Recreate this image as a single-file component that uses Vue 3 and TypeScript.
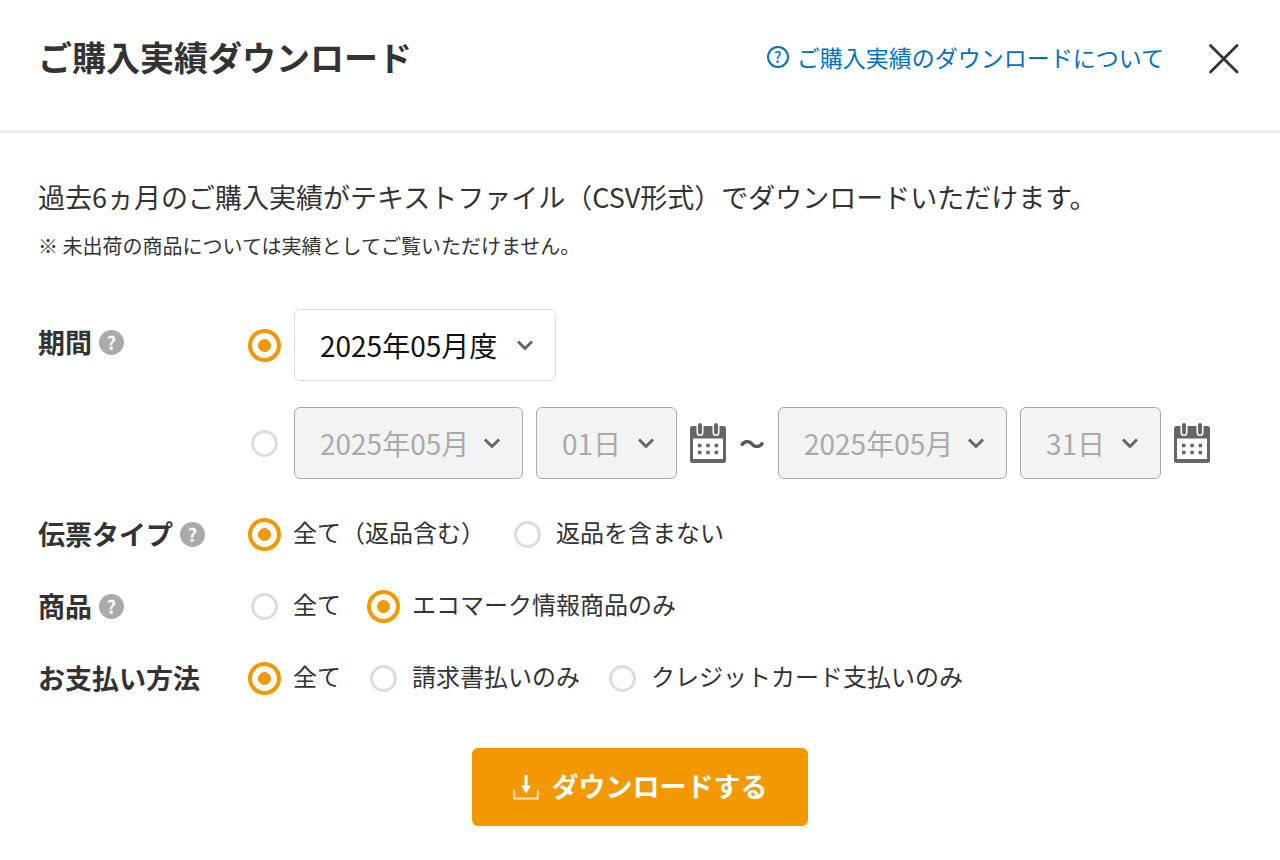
<script setup lang="ts">
import { reactive } from 'vue'

type Choice = { value: string; text: string }
type ChoiceRow = { key: 'slip' | 'item' | 'payment'; label: string; help: boolean; choices: Choice[] }

const form = reactive({
  period: 'month',
  month: '2025年05月度',
  fromMonth: '2025年05月',
  fromDay: '01日',
  toMonth: '2025年05月',
  toDay: '31日',
  slip: 'all',
  item: 'eco',
  payment: 'all',
})

const rows: ChoiceRow[] = [
  {
    key: 'slip',
    label: '伝票タイプ',
    help: true,
    choices: [
      { value: 'all', text: '全て（返品含む）' },
      { value: 'noReturn', text: '返品を含まない' },
    ],
  },
  {
    key: 'item',
    label: '商品',
    help: true,
    choices: [
      { value: 'all', text: '全て' },
      { value: 'eco', text: 'エコマーク情報商品のみ' },
    ],
  },
  {
    key: 'payment',
    label: 'お支払い方法',
    help: false,
    choices: [
      { value: 'all', text: '全て' },
      { value: 'invoice', text: '請求書払いのみ' },
      { value: 'card', text: 'クレジットカード支払いのみ' },
    ],
  },
]

const ranges = [
  { id: 'from', name: '開始', month: 'fromMonth', day: 'fromDay' },
  { id: 'to', name: '終了', month: 'toMonth', day: 'toDay' },
] as const
</script>

<template>
  <main class="dialog">
    <header class="header">
      <h1 class="title">ご購入実績ダウンロード</h1>
      <a class="about" href="#about">
        <span class="about-mark" aria-hidden="true">?</span>
        <span>ご購入実績のダウンロードについて</span>
      </a>
      <button class="close" type="button" aria-label="閉じる">
        <svg viewBox="0 0 34 34" width="34" height="34" aria-hidden="true">
          <path d="M2.500 5.500 29 32M29 5.500 2.500 32" fill="none" stroke="#333" stroke-width="2.800" stroke-linecap="round" />
        </svg>
      </button>
    </header>

    <form class="body" @submit.prevent>
      <p class="lead">過去6ヵ月のご購入実績がテキストファイル（CSV形式）でダウンロードいただけます。</p>
      <p class="note">※ 未出荷の商品については実績としてご覧いただけません。</p>

      <div class="rows">
        <div class="row row-period" role="radiogroup" aria-labelledby="label-period">
          <div class="label">
            <span id="label-period">期間</span>
            <button class="help" type="button" aria-label="期間のヘルプ">?</button>
          </div>
          <div class="period">
            <div class="line">
              <input v-model="form.period" class="radio" type="radio" name="period" value="month" aria-label="月度で指定" />
              <div class="select select-term">
                <select v-model="form.month" aria-label="月度">
                  <option>2025年05月度</option>
                </select>
                <svg class="chevron" viewBox="0 0 18 12" aria-hidden="true"><path d="M2 2.500 9 9.500 16 2.500" /></svg>
              </div>
            </div>
            <div class="line">
              <input v-model="form.period" class="radio" type="radio" name="period" value="range" aria-label="日付で指定" />
              <template v-for="(range, index) in ranges" :key="range.id">
                <span v-if="index > 0" class="wave">〜</span>
                <div class="select select-month">
                  <select v-model="form[range.month]" :disabled="form.period !== 'range'" :aria-label="range.name + '月'">
                    <option>2025年05月</option>
                  </select>
                  <svg class="chevron" viewBox="0 0 18 12" aria-hidden="true"><path d="M2 2.500 9 9.500 16 2.500" /></svg>
                </div>
                <div class="select select-day">
                  <select v-model="form[range.day]" :disabled="form.period !== 'range'" :aria-label="range.name + '日'">
                    <option>{{ form[range.day] }}</option>
                  </select>
                  <svg class="chevron" viewBox="0 0 18 12" aria-hidden="true"><path d="M2 2.500 9 9.500 16 2.500" /></svg>
                </div>
                <button class="calendar" type="button" :aria-label="range.name + '日をカレンダーで選択'">
                  <svg viewBox="0 0 36 40" width="36" height="40" aria-hidden="true">
                    <rect x="0" y="3" width="36" height="37" rx="2.500" fill="#666" />
                    <rect x="3" y="15.500" width="30" height="20.500" fill="#fff" />
                    <path d="M10 2V9.500M26 2V9.500" stroke="#fff" stroke-width="7" stroke-linecap="round" />
                    <path d="M10 2V9.500M26 2V9.500" stroke="#666" stroke-width="4" stroke-linecap="round" />
                    <path d="M8 22.500h3.500M16.300 22.500h3.500M24.600 22.500h3.500M8 29.500h3.500M16.300 29.500h3.500M24.600 29.500h3.500" stroke="#666" stroke-width="3.500" />
                  </svg>
                </button>
              </template>
            </div>
          </div>
        </div>

        <div v-for="row in rows" :key="row.key" class="row" role="radiogroup" :aria-labelledby="'label-' + row.key">
          <div class="label">
            <span :id="'label-' + row.key">{{ row.label }}</span>
            <button v-if="row.help" class="help" type="button" :aria-label="row.label + 'のヘルプ'">?</button>
          </div>
          <div class="choices">
            <label v-for="choice in row.choices" :key="choice.value" class="choice">
              <input v-model="form[row.key]" class="radio" type="radio" :name="row.key" :value="choice.value" />
              <span class="choice-text">{{ choice.text }}</span>
            </label>
          </div>
        </div>
      </div>

      <button class="submit" type="submit">
        <svg viewBox="0 0 26 26" width="26" height="26" aria-hidden="true">
          <path d="M1.200 16V24.500H24.800V16" fill="none" stroke="#fff" stroke-opacity="0.750" stroke-width="1.800" />
          <path d="M13 1V14" fill="none" stroke="#fff" stroke-width="3" />
          <path d="M8 11.500H18L13 19.500Z" fill="#fff" />
        </svg>
        <span class="submit-text">ダウンロードする</span>
      </button>
    </form>
  </main>
</template>

<style>
body {
  background: #fff;
}
</style>

<style scoped>
.dialog {
  color: #333;
  font-family: "Noto Sans CJK JP", sans-serif;
}

.dialog * {
  box-sizing: border-box;
}

.header {
  display: flex;
  align-items: center;
  padding: 37px 38px 53px;
  border-bottom: 3px solid #ececec;
}

.title {
  flex: 1;
  margin: 0;
  font-size: 34px;
  line-height: 40px;
  font-weight: 700;
}

.about {
  display: flex;
  align-items: center;
  gap: 8px;
  color: #0072c3;
  font-size: 23px;
  line-height: 40px;
  text-decoration: none;
}

.about-mark {
  display: flex;
  align-items: center;
  justify-content: center;
  width: 22px;
  height: 22px;
  border: 2px solid currentColor;
  border-radius: 50%;
  font-size: 15px;
  line-height: 18px;
  font-weight: 500;
}

button {
  padding: 0;
  border: 0;
  background: none;
  font-family: inherit;
  cursor: pointer;
}

svg {
  display: block;
}

.close {
  margin-left: 44px;
}

.body {
  display: flex;
  flex-direction: column;
  padding: 44px 38px 34px;
}

.lead {
  margin: 0;
  font-size: 27px;
  line-height: 40px;
}

.note {
  margin: 14px 0 0;
  font-size: 20px;
  line-height: 30px;
}

.rows {
  display: flex;
  flex-direction: column;
  gap: 39px;
  margin-top: 48px;
}

.row {
  display: grid;
  grid-template-columns: 210px 1fr;
}

.label {
  display: flex;
  align-items: center;
  gap: 7px;
  height: 32px;
  font-size: 27px;
  line-height: 32px;
  font-weight: 700;
}

.row-period .label {
  margin-top: 17px;
}

.help {
  width: 25px;
  height: 25px;
  border-radius: 50%;
  background: #aaa;
  color: #fff;
  font-size: 18px;
  line-height: 25px;
  font-weight: 700;
  text-align: center;
}

.period {
  display: flex;
  flex-direction: column;
  gap: 26px;
}

.line {
  display: flex;
  flex-wrap: wrap;
  align-items: center;
  gap: 13px;
}

.radio {
  appearance: none;
  display: grid;
  place-items: center;
  flex: none;
  width: 27px;
  height: 27px;
  margin: 3px;
  border: 3px solid #ddd;
  border-radius: 50%;
  background: #fff;
}

.radio:checked {
  width: 33px;
  height: 33px;
  margin: 0;
  border: 4px solid #f39800;
}

.radio:checked::before {
  content: "";
  width: 13px;
  height: 13px;
  border-radius: 50%;
  background: #f39800;
}

.select {
  position: relative;
}

.select-term {
  width: 262px;
}

.select-month {
  width: 229px;
}

.select-day {
  width: 141px;
}

select {
  appearance: none;
  display: block;
  width: 100%;
  height: 72px;
  padding: 0 0 0 25px;
  border: 1px solid #ddd;
  border-radius: 6px;
  background: #fff;
  color: #111;
  font-family: inherit;
  font-size: 28px;
}

select:disabled {
  border-color: #aaa;
  background: #f3f3f3;
  color: #aaa;
  opacity: 1;
}

.chevron {
  position: absolute;
  top: 30px;
  right: 22px;
  width: 18px;
  height: 12px;
  pointer-events: none;
}

.chevron path {
  fill: none;
  stroke: #666;
  stroke-width: 3;
}

.wave {
  width: 26px;
  color: #555;
  font-size: 26px;
  line-height: 40px;
  font-weight: 700;
}

.choices {
  display: flex;
  flex-wrap: wrap;
  gap: 26px;
}

.choice {
  display: flex;
  align-items: center;
  gap: 12px;
}

.choice-text {
  padding-bottom: 5px;
  font-size: 24px;
  line-height: 28px;
}

.submit {
  display: flex;
  align-items: center;
  justify-content: center;
  align-self: center;
  gap: 13px;
  width: 336px;
  max-width: 100%;
  height: 78px;
  margin-top: 53px;
  border-radius: 6px;
  background: #f39800;
  color: #fff;
  font-size: 27px;
  font-weight: 700;
}

.submit-text {
  padding-bottom: 3px;
}
</style>
